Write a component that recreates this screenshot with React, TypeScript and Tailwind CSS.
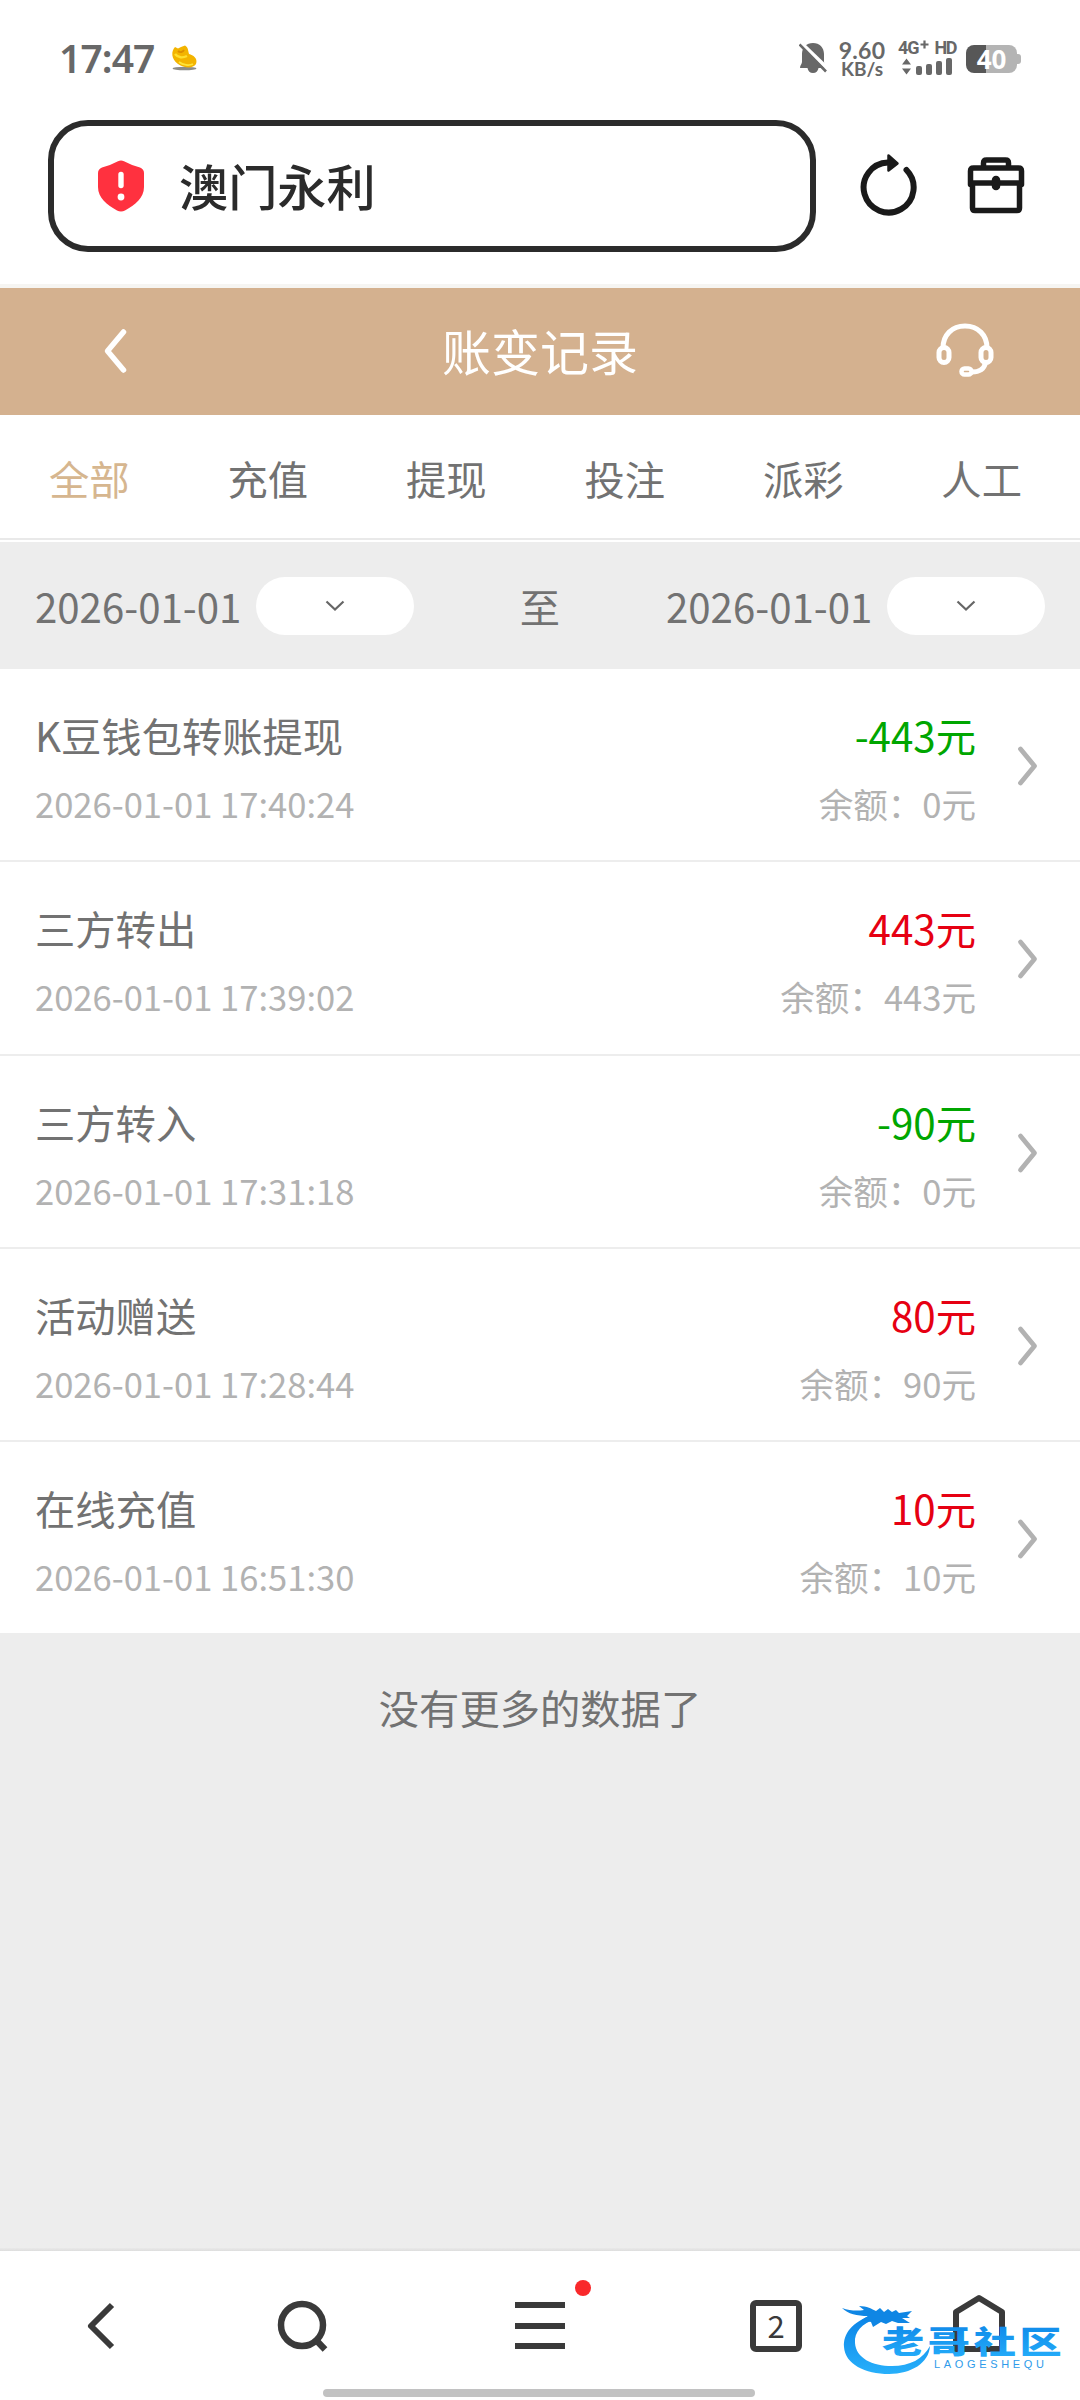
import { useState } from 'react';

type RecordItem = {
  id: number;
  title: string;
  time: string;
  amount: number;
  balance: number;
};

const tabs = ['全部', '充值', '提现', '投注', '派彩', '人工'];

const records: RecordItem[] = [
  { id: 1, title: 'K豆钱包转账提现', time: '2026-01-01 17:40:24', amount: -443, balance: 0 },
  { id: 2, title: '三方转出', time: '2026-01-01 17:39:02', amount: 443, balance: 443 },
  { id: 3, title: '三方转入', time: '2026-01-01 17:31:18', amount: -90, balance: 0 },
  { id: 4, title: '活动赠送', time: '2026-01-01 17:28:44', amount: 80, balance: 90 },
  { id: 5, title: '在线充值', time: '2026-01-01 16:51:30', amount: 10, balance: 10 },
];

const StatusBar: React.FC = () => (
  <div className="flex h-[120px] items-start justify-between pl-[59px] pr-[59px] pt-[36px] font-['Noto_Sans',sans-serif] text-[#686868]">
    <div className="flex h-[44px] items-center">
      <span className="text-[39px] leading-[44px] font-semibold tracking-[-0.9px]">17:47</span>
      <svg className="ml-[15px] h-[28px] w-[30px]" viewBox="0 0 30 28">
        <ellipse cx="14.500" cy="24.500" rx="12" ry="1.800" fill="#8d8c86" />
        <path
          d="M5 3 L8 4.500 L11 3 L15 1.500 C18 3 18 6 19 10 C23 11 28 14 26 20 C23 25 14 24 8 20 C1 15 1 7 5 3Z"
          fill="#f3b400"
        />
        <path d="M5 10 C8 14 13 14 17 12" fill="none" stroke="#ffdf2e" strokeWidth="2.500" />
        <path d="M9 18 C13 21 19 22 23 20" fill="none" stroke="#ffe437" strokeWidth="1.800" />
        <path d="M8 7 C10 9 13 8 14 6" fill="none" stroke="#dd8f00" strokeWidth="1.800" />
      </svg>
    </div>
    <div className="flex h-[44px] items-start">
      <svg className="mt-[6px] h-[32px] w-[28px]" viewBox="0 0 28 32">
        <path
          d="M14 1 C20.500 1 25 5.500 25 12 V20 C25 22 27 23 27 26 H1 C1 23 3 22 3 20 V12 C3 5.500 7.500 1 14 1Z"
          fill="#686868"
        />
        <path d="M8.500 26 H19.500 C19 29 17 31 14 31 C11 31 9 29 8.500 26Z" fill="#686868" />
        <path d="M2 1 L30 28" stroke="#fff" strokeWidth="4" />
        <path d="M0.500 2.500 L27 29.500" stroke="#686868" strokeWidth="2.600" />
      </svg>
      <div className="ml-[11px] flex w-[48px] flex-col items-center pt-[4px] font-['Lato',sans-serif] font-bold">
        <span className="text-[23px] leading-[20px] tracking-[0.3px]">9.60</span>
        <span className="text-[19px] leading-[17px]">KB/s</span>
      </div>
      <div className="ml-[12px] flex w-[58px] flex-col pt-[3px]">
        <div className="flex h-[17px] justify-between font-['Roboto',sans-serif] text-[18px] leading-[17px] font-bold">
          <span className="flex tracking-[-1px]">
            4G
            <svg className="mt-[1px] ml-[1px] size-[9px]" viewBox="0 0 9 9">
              <path d="M4.500 0.500 V8.500 M0.500 4.500 H8.500" stroke="#686868" strokeWidth="2.200" />
            </svg>
          </span>
          <span className="tracking-[-1.5px]">HD</span>
        </div>
        <div className="mt-[2px] flex h-[17px] items-end gap-[4px] pl-[4px]">
          <svg className="mr-[1px] h-[17px] w-[9px]" viewBox="0 0 9 17">
            <path d="M4.500 0.500 L9 6.500 H0Z M4.500 16.500 L9 10.500 H0Z" fill="#686868" />
          </svg>
          <i className="h-[9px] w-[6px] rounded-[2px] bg-[#686868]" />
          <i className="h-[11px] w-[6px] rounded-[2px] bg-[#686868]" />
          <i className="h-[14px] w-[6px] rounded-[2px] bg-[#686868]" />
          <i className="h-[17px] w-[6px] rounded-[2px] bg-[#686868]" />
        </div>
      </div>
      <div className="mt-[9px] ml-[10px] flex items-center">
        <div className="flex h-[28px] w-[51px] items-center justify-center rounded-[8px] bg-linear-to-r from-[#575757] from-40% to-[#b4b4b4] to-40% text-[26px] leading-[28px] font-bold text-white">
          40
        </div>
        <i className="h-[10px] w-[4px] rounded-r-[3px] bg-[#b4b4b4]" />
      </div>
    </div>
  </div>
);

const AddressBar: React.FC = () => (
  <div className="flex h-[132px] items-center pl-[48px]">
    <div className="flex h-[132px] w-[768px] items-center rounded-[40px] border-[6px] border-[#2b2b2b] pl-[44px]">
      <svg className="h-[52px] w-[46px]" viewBox="0 0 46 52">
        <path
          d="M20 1.200 Q23 -0.300 26 1.200 Q33 5 42 7.500 Q46 9 46 13 V27 C46 38 37 45 27 50.500 Q23 52.500 19 50.500 C9 45 0 38 0 27 V13 Q0 9 4 7.500 Q13 5 20 1.200Z"
          fill="#ff313f"
        />
        <path d="M23 14.500 V25.500" stroke="#fff" strokeWidth="5.400" strokeLinecap="round" />
        <circle cx="23" cy="37" r="3.400" fill="#fff" />
      </svg>
      <span className="mb-[3px] ml-[35px] text-[49.200px] leading-[60px] font-medium text-[#2b2b2b]">
        澳门永利
      </span>
    </div>
    <svg className="mb-[4px] ml-[43px] h-[64px] w-[58px]" viewBox="0 0 58 64">
      <path
        d="M47.500 18 A25 25 0 1 1 29 10.500"
        fill="none"
        stroke="#1a1a1a"
        strokeWidth="6"
        strokeLinecap="round"
      />
      <path
        d="M29.500 3.500 L38.500 11.500 L29.500 18.500Z"
        fill="#1a1a1a"
        stroke="#1a1a1a"
        strokeWidth="2.500"
        strokeLinejoin="round"
      />
    </svg>
    <svg
      className="mb-[3px] ml-[49px] h-[60px] w-[60px]"
      viewBox="0 0 60 60"
      fill="none"
      stroke="#1a1a1a"
      strokeWidth="5.500"
      strokeLinejoin="round"
    >
      <path d="M17.500 12 V8 Q17.500 5 20.500 5 H39.500 Q42.500 5 42.500 8 V12" />
      <path d="M4.500 29.500 V16 Q4.500 13 7.500 13 H52.500 Q55.500 13 55.500 16 V29.500" strokeLinecap="round" />
      <path d="M4.500 28 H55.500" />
      <path d="M6.500 29 V53 Q6.500 55.500 9 55.500 H51 Q53.500 55.500 53.500 53 V29" />
      <path d="M30 25 V31" strokeWidth="8.500" strokeLinecap="round" />
    </svg>
  </div>
);

const PageHeader: React.FC = () => (
  <header className="flex h-[127px] items-center justify-between bg-[#d4b18f] pr-[86px] pb-[2px] pl-[103px]">
    <svg className="h-[46px] w-[41px]" viewBox="0 0 41 46">
      <path
        d="M20.500 4 L4.500 23 L20.500 42"
        fill="none"
        stroke="#fff"
        strokeWidth="5.500"
        strokeLinecap="round"
        strokeLinejoin="round"
      />
    </svg>
    <h1 className="mb-[2px] text-[49px] leading-[60px] text-white">账变记录</h1>
    <svg className="mb-[2px] h-[58px] w-[58px]" viewBox="0 0 58 58" fill="none" stroke="#fff" strokeWidth="5">
      <path d="M7 27 C7 14 16 5 29 5 C42 5 51 14 51 27" />
      <rect x="3" y="26.500" width="10" height="15" rx="5" />
      <rect x="45" y="26.500" width="10" height="15" rx="5" />
      <path d="M49.500 42 C48 48 44 51 36 51" />
      <rect x="25.500" y="47.500" width="10" height="6" rx="3" strokeWidth="4.500" />
    </svg>
  </header>
);

const DateSelect: React.FC<{ value: string }> = ({ value }) => (
  <div className="flex items-center">
    <span className="w-[221px] pt-px text-[40.200px] leading-[60px]">{value}</span>
    <button className="flex h-[58px] w-[158px] items-center justify-center rounded-full bg-white">
      <svg className="h-[12px] w-[20px]" viewBox="0 0 20 12">
        <path d="M1.500 1.500 L10 9.500 L18.500 1.500" fill="none" stroke="#666" strokeWidth="2.200" />
      </svg>
    </button>
  </div>
);

const RecordRow: React.FC<{ item: RecordItem }> = ({ item }) => (
  <li className="flex h-[193.300px] items-center border-b-2 border-[#ededed] bg-white pt-[3px] pr-[41px] pl-[35px]">
    <div className="flex flex-1 flex-col pt-[8px]">
      <span className="text-[40.300px] leading-[66px] text-[#727272]">{item.title}</span>
      <span className="text-[34.560px] leading-[70px] text-[#b2b2b2]">{item.time}</span>
    </div>
    <div className="flex flex-col items-end pt-[8px]">
      <span
        className={`text-[40.300px] leading-[66px] ${
          item.amount < 0 ? 'text-[#00a600]' : 'text-[#e60012]'
        }`}
      >
        {item.amount}元
      </span>
      <span className="text-[34.560px] leading-[70px] text-[#b2b2b2]">
        余额：{item.balance}元
      </span>
    </div>
    <svg className="ml-[40px] h-[42px] w-[23px]" viewBox="0 0 23 42">
      <path
        d="M4.500 4 L18.500 21 L4.500 38"
        fill="none"
        stroke="#b2b2b2"
        strokeWidth="4.800"
        strokeLinecap="round"
        strokeLinejoin="round"
      />
    </svg>
  </li>
);

// Community logo that floats above the home button
const Watermark: React.FC = () => (
  <svg className="absolute top-[54px] left-[838px] h-[76px] w-[230px]" viewBox="0 0 230 76">
    <defs>
      <linearGradient id="wave" x1="0" y1="0" x2="0" y2="1">
        <stop offset="0" stopColor="#0b83e6" />
        <stop offset="1" stopColor="#27b0fb" />
      </linearGradient>
    </defs>
    <path
      d="M34 10 C14 17 5 29 6 42 C7 59 27 69 51 69 C73 69 91 58 92 41 C85 54 72 61 54 61 C34 61 18 53 17 38 C16 27 24 18 38 14Z"
      fill="url(#wave)"
    />
    <path
      d="M4 3 C12 6 20 6 26 5 L21 1 C29 1 34 4 38 6 L42 3 L46 7 L50 4 L54 7 L58 5 L61 8 L74 6 L69 11 L72 13 L64 13 L72 18 L60 18 L54 16 L48 19 L43 17 L35 22 L33 17 L24 15 L30 11 C19 11 10 9 4 3Z"
      fill="#0f86e4"
    />
    <text
      transform="translate(44 48) scale(1.360 1)"
      className="font-['Noto_Sans_CJK_SC',sans-serif] text-[31px] font-black"
      letterSpacing="2.700"
      fill="url(#wave)"
    >
      老哥社区
    </text>
    <text
      x="96"
      y="63"
      className="font-['Liberation_Sans',sans-serif] text-[11px]"
      textLength="110"
      fill="#2e9bea"
    >
      LAOGESHEQU
    </text>
  </svg>
);

const BottomNav: React.FC = () => (
  <nav className="relative flex h-[149px] flex-col bg-white">
    <div className="flex h-[138px] items-center pt-[11px] pl-[85px]">
      <svg className="h-[54px] w-[34px]" viewBox="0 0 34 54">
        <path d="M27 6 L6 27 L27 48" fill="none" stroke="#3a3a3a" strokeWidth="6" strokeLinejoin="round" />
      </svg>
      <svg
        className="ml-[157px] h-[54px] w-[54px]"
        viewBox="0 0 54 54"
        fill="none"
        stroke="#3a3a3a"
        strokeWidth="6.500"
      >
        <circle cx="26" cy="26" r="21" />
        <path d="M40 41 L49 50.500" />
      </svg>
      <div className="relative ml-[185px] flex h-[47px] w-[50px] flex-col justify-between">
        <i className="h-[6px] bg-[#3a3a3a]" />
        <i className="h-[6px] bg-[#3a3a3a]" />
        <i className="h-[6px] bg-[#3a3a3a]" />
        <i className="absolute -top-[22px] left-[60px] size-[16px] rounded-full bg-[#f9292b]" />
      </div>
      <div className="ml-[185px] flex size-[52px] items-center justify-center rounded-[6px] border-[6px] border-[#3a3a3a] pb-[3px] text-[31px] leading-[37px] text-[#3a3a3a]">
        2
      </div>
      <svg
        className="mb-[4px] ml-[149px] h-[60px] w-[56px]"
        viewBox="0 0 56 60"
        fill="none"
        stroke="#3a3a3a"
        strokeWidth="6"
        strokeLinejoin="round"
      >
        <path d="M5 55 V18 L28 4 L51 18 V55Z" />
      </svg>
    </div>
    <div className="ml-[323px] h-[8px] w-[432px] rounded-full bg-[#c2c2c2]" />
    <Watermark />
  </nav>
);

const App: React.FC = () => {
  const [active, setActive] = useState<number>(0);

  return (
    <div className="flex h-[2400px] w-[1080px] flex-col overflow-hidden bg-white font-['Noto_Sans_CJK_SC',sans-serif]">
      <StatusBar />
      <AddressBar />
      <div className="mt-[32px] h-[4px] bg-[#f6f5f2]" />
      <PageHeader />
      <div className="flex h-[125px] items-center justify-between border-b-2 border-[#e9e9e9] pt-[2px] pr-[58px] pl-[49px]">
        {tabs.map((tab, index) => (
          <button
            key={tab}
            className={`text-[40.300px] leading-[60px] ${
              active === index ? 'text-[#d6b68f]' : 'text-[#727272]'
            }`}
            onClick={() => setActive(index)}
          >
            {tab}
          </button>
        ))}
      </div>
      <main className="mt-[2px] flex flex-1 flex-col bg-[#ededed] text-[#727272]">
        <div className="flex h-[127px] items-center justify-between px-[35px]">
          <DateSelect value="2026-01-01" />
          <span className="text-[40.300px] leading-[60px]">至</span>
          <DateSelect value="2026-01-01" />
        </div>
        <ul>
          {records.map((item) => (
            <RecordRow key={item.id} item={item} />
          ))}
        </ul>
        <p className="mt-[42px] text-center text-[40.300px] leading-[60px]">没有更多的数据了</p>
      </main>
      <div className="h-[3px] bg-linear-to-b from-[#e9e9e9] to-[#dedede]" />
      <BottomNav />
    </div>
  );
};

export default App;
